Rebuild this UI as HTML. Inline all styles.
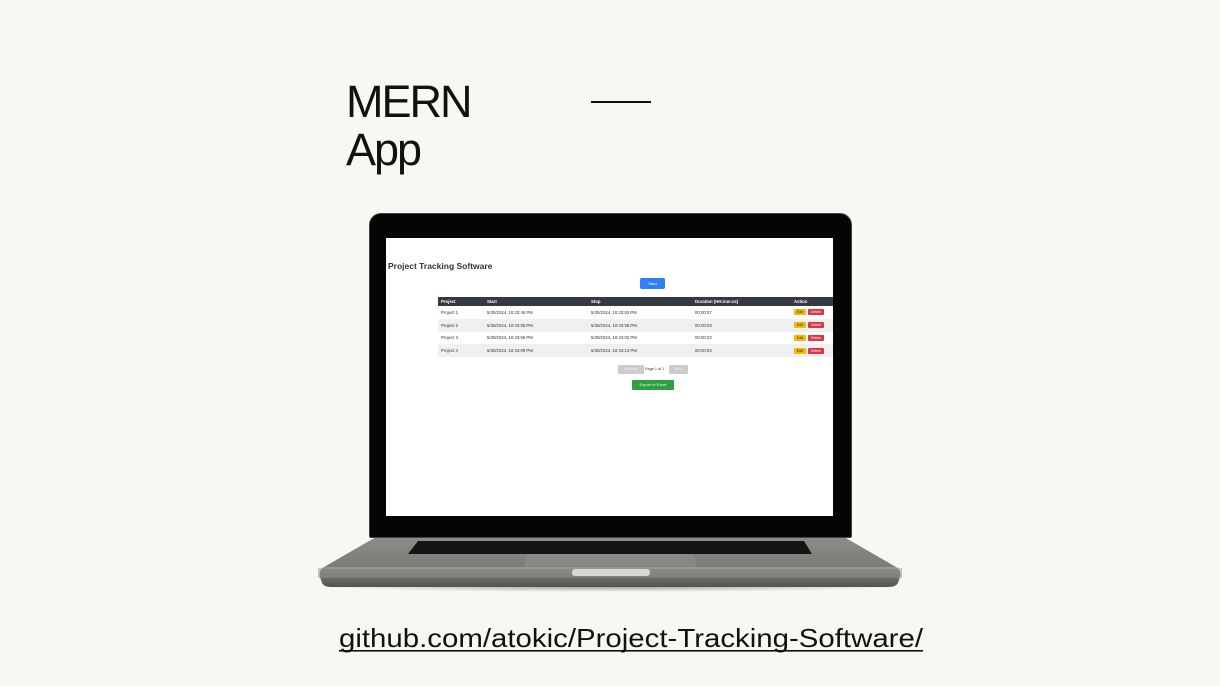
<!DOCTYPE html>
<html><head><style>
body{margin:0;width:1220px;height:686px;background:#f8f8f3;position:relative;overflow:hidden;font-family:"Liberation Sans",sans-serif}
.abs{position:absolute}
.t{font-size:45px;color:#111;left:346px;line-height:48px;letter-spacing:-2px}
td,th{padding:0 3px;height:12.8px;font-size:4.3px;text-align:left;white-space:nowrap}
th{background:#343a40;color:#fff;height:9px;font-weight:bold}
tr:nth-child(odd) td{background:#f0f0f0}
td{color:#333}
table{border-collapse:collapse;position:absolute;left:438px;top:297px;width:395px}
.e{display:inline-block;background:#f5b700;color:#222;padding:1px 3px;border-radius:1px;font-size:3.5px}
.d{display:inline-block;background:#dc3545;color:#fff;padding:1px 3px;border-radius:1px;font-size:3.5px;margin-left:2px}
</style></head><body>
<div class="abs t" style="top:78px">MERN</div>
<div class="abs t" style="top:126px">App</div>
<div class="abs" style="left:591px;top:101px;width:60px;height:2px;background:#111"></div>

<div class="abs" style="left:316px;top:582px;width:590px;height:10px;background:radial-gradient(ellipse at center,rgba(0,0,0,.35),rgba(0,0,0,0) 70%)"></div>
<svg class="abs" style="left:318px;top:535px" width="584" height="56">
<defs><linearGradient id="g" x1="0" y1="0" x2="0" y2="1"><stop offset="0" stop-color="#8e8c89"/><stop offset=".7" stop-color="#7a7874"/><stop offset="1" stop-color="#55534f"/></linearGradient></defs>
<path d="M58 2 H526 L578 32 Q584 36 582 42 L580 48 Q578 52 570 52 H14 Q6 52 4 48 L2 42 Q0 36 6 32 Z" fill="url(#g)"/>
<path d="M4 33 H580" stroke="#b5b3ae" stroke-width="1"/>
<rect x="0" y="33" width="584" height="10" fill="#96948f" opacity=".5"/>
<path d="M100 6 H486 L494 19 H90 Z" fill="#141414"/>
<path d="M210 20 H374 L378 31 H207 Z" fill="#8a8884" stroke="#9e9c98" stroke-width=".5"/>
<rect x="254" y="34" width="78" height="7" rx="3" fill="#d8d7d4"/>
</svg>
<div class="abs" style="left:369px;top:213px;width:483px;height:325px;background:#050505;border-radius:12px 12px 2px 2px;border:1px solid #444;box-sizing:border-box"></div>
<div class="abs" style="left:386px;top:238px;width:447px;height:278px;background:#fff"></div>
<div class="abs" style="left:388px;top:261px;font-size:8.5px;font-weight:bold;color:#333">Project Tracking Software</div>
<div class="abs" style="left:640px;top:278px;width:25px;height:11px;background:#2f7ff5;border-radius:2px;color:#fff;font-size:4px;text-align:center;line-height:11px">Start</div>
<table>
<tr><th style="width:40px">Project</th><th style="width:98px">Start</th><th style="width:98px">Stop</th><th style="width:93px">Duration (HH:mm:ss)</th><th>Action</th></tr>
<tr><td>Project 1</td><td>5/30/2024, 10:43:46 PM</td><td>5/30/2024, 10:43:53 PM</td><td>00:00:07</td><td><span class="e">Edit</span><span class="d">Delete</span></td></tr>
<tr><td>Project 2</td><td>5/30/2024, 10:43:55 PM</td><td>5/30/2024, 10:43:58 PM</td><td>00:00:03</td><td><span class="e">Edit</span><span class="d">Delete</span></td></tr>
<tr><td>Project 3</td><td>5/30/2024, 10:43:59 PM</td><td>5/30/2024, 10:44:02 PM</td><td>00:00:03</td><td><span class="e">Edit</span><span class="d">Delete</span></td></tr>
<tr><td>Project 4</td><td>5/30/2024, 10:44:09 PM</td><td>5/30/2024, 10:44:13 PM</td><td>00:00:04</td><td><span class="e">Edit</span><span class="d">Delete</span></td></tr>
</table>
<div class="abs" style="left:618px;top:365px;width:26px;height:9px;background:#ccc;border-radius:1px;color:#eee;font-size:3.5px;text-align:center;line-height:9px">Previous</div>
<div class="abs" style="left:645px;top:367px;font-size:3.8px;color:#333">Page 1 of 1</div>
<div class="abs" style="left:669px;top:365px;width:19px;height:9px;background:#ccc;border-radius:1px;color:#eee;font-size:3.5px;text-align:center;line-height:9px">Next</div>
<div class="abs" style="left:632px;top:380px;width:42px;height:10px;background:#2e9e3e;border-radius:1px;color:#fff;font-size:4px;text-align:center;line-height:10px">Export to Excel</div>

<svg class="abs" style="left:0;top:610px" width="1220" height="50">
<text x="339" y="37" textLength="584" lengthAdjust="spacingAndGlyphs" font-family="Liberation Sans, sans-serif" font-size="26" fill="#111">github.com/atokic/Project-Tracking-Software/</text>
<rect x="339" y="40" width="584" height="1.6" fill="#111"/>
</svg>
</body></html>
